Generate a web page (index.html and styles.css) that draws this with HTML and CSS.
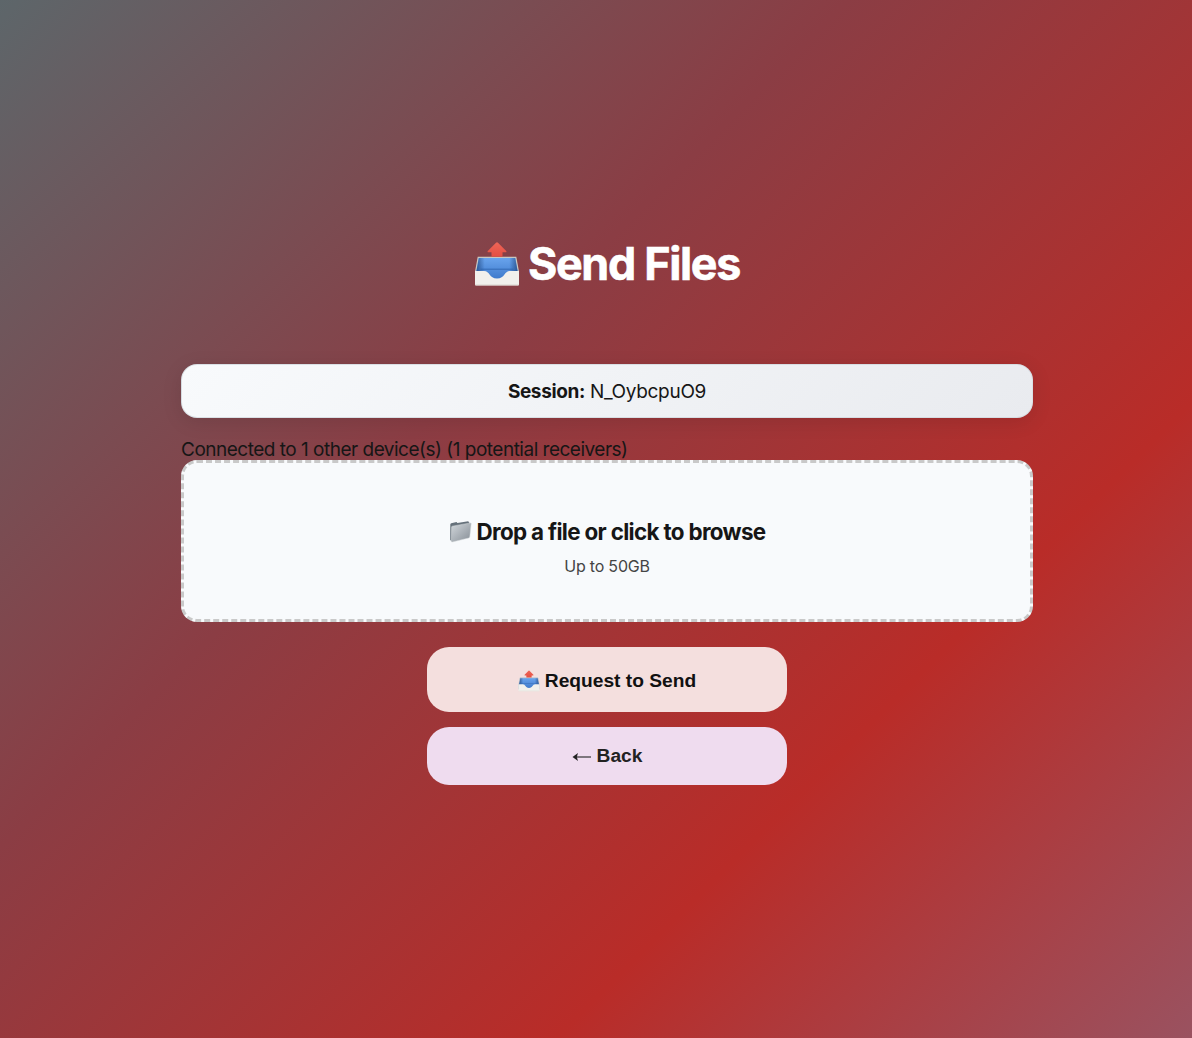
FILE: index.html
```html
<!DOCTYPE html>
<html lang="en">
<head>
<meta charset="utf-8">
<title>Send Files</title>
<link rel="stylesheet" href="styles.css">
</head>
<body>
<svg width="0" height="0" class="defs" aria-hidden="true">
  <defs>
    <linearGradient id="blue" x1="0" y1="0" x2="0" y2="1"><stop offset="0" stop-color="#6aa5ee"/><stop offset="1" stop-color="#3a76c8"/></linearGradient>
    <linearGradient id="side" x1="0" y1="0" x2="1" y2="0"><stop offset="0" stop-color="#173a70" stop-opacity=".65"/><stop offset=".2" stop-color="#173a70" stop-opacity="0"/><stop offset=".8" stop-color="#173a70" stop-opacity="0"/><stop offset="1" stop-color="#173a70" stop-opacity=".65"/></linearGradient>
    <linearGradient id="red" x1="0" y1="0" x2="0" y2="1"><stop offset="0" stop-color="#ee6557"/><stop offset="1" stop-color="#e44f43"/></linearGradient>
    <linearGradient id="metal" x1="0" y1="0" x2="1" y2="1"><stop offset="0" stop-color="#d2d7dc"/><stop offset="1" stop-color="#858d95"/></linearGradient>
    <symbol id="outbox" viewBox="0 0 46 46">
      <path d="M4.200 16.400H41.800L44.300 30V40H1.700V30Z" fill="url(#blue)" stroke="#c9c8c1" stroke-width="1.200"/>
      <path d="M4.800 17H41.200L43.500 30V38H2.500V30Z" fill="url(#side)"/>
      <path d="M6.500 28.200H39.500" stroke="#2c61a9" stroke-width=".8"/>
      <path d="M1 30H10C16 30 15 37.500 23 37.500S30 30 36 30H45V43.500Q45 44.400 44 44.400H2Q1 44.400 1 43.500Z" fill="#f1f0ec"/>
      <path d="M1.400 43.800H44.600" stroke="#dfddd7" stroke-width="1"/>
      <path d="M23 1.200Q23.500 1.200 24 1.700L32.200 9.900Q33 11.300 31.500 11.300H28.500V15.200Q28.500 15.800 27.800 15.800H18.200Q17.500 15.800 17.500 15.200V11.300H14.500Q13 11.300 13.800 9.900L22 1.700Q22.500 1.200 23 1.200Z" fill="url(#red)"/>
    </symbol>
    <symbol id="folder" viewBox="0 0 23 23">
      <path d="M1.300 4.400Q1.300 3.400 2.200 3.200L7.500 2L8.400 2.900L19.200 1.200L20.400 2.700L18 17L3.200 21.500L1.200 20Z" fill="#66717b"/>
      <path d="M3.300 6.200L21.500 2.900Q22.300 2.800 22.200 3.700L20.800 16.600Q20.600 17.700 19.700 18L3.200 22Q2.200 22.200 2.300 21.100L2.600 7.100Q2.600 6.400 3.300 6.200Z" fill="url(#metal)" stroke="#d6dadd" stroke-width=".5"/>
    </symbol>
  </defs>
</svg>
<main class="page">
  <h1 class="title"><svg class="title-icon" aria-hidden="true"><use href="#outbox"/></svg><span>Send Files</span></h1>
  <div class="session"><span><strong>Session:</strong> N_OybcpuO9</span></div>
  <p class="status">Connected to 1 other device(s) (1 potential receivers)</p>
  <div class="dropzone">
    <div class="drop-title"><svg class="folder-icon" aria-hidden="true"><use href="#folder"/></svg><span>Drop a file or click to browse</span></div>
    <div class="drop-hint">Up to 50GB</div>
  </div>
  <button class="btn send"><svg class="send-icon" aria-hidden="true"><use href="#outbox"/></svg><span>Request to Send</span></button>
  <button class="btn back"><svg class="arrow" viewBox="0 0 20 12" aria-hidden="true"><path d="M3 7H19" stroke="#333" stroke-width="1.200"/><path d="M.5 7L6 3L4.800 7L6 11Z" fill="#222"/></svg><span>Back</span></button>
</main>
</body>
</html>
```
FILE: styles.css
```css
* { box-sizing: border-box; }

body {
  margin: 0;
  height: 1038px;
  overflow: hidden;
  font-family: Inter, "Liberation Sans", sans-serif;
  color: #161616;
  background: linear-gradient(135deg, #5d666a 0%, #8b3d44 38%, #b92c28 71.5%, #9a5260 100%);
}

.defs { position: absolute; }

.page {
  display: flex;
  flex-direction: column;
  align-items: center;
  width: 852px;
  margin-left: 181px;
  padding-top: 236px;
}

.title {
  display: flex;
  align-items: center;
  gap: 8px;
  height: 56px;
  margin: 0 0 72px;
  font-size: 44.8px;
  font-weight: 700;
  letter-spacing: -1.3px;
  color: #fff;
  -webkit-text-stroke: 0.6px #fff;
}

.title-icon { width: 46px; height: 46px; margin-top: -1px; }
.title span { margin-top: -1px; }

.session {
  display: flex;
  align-items: center;
  justify-content: center;
  width: 100%;
  height: 54px;
  border: 1px solid rgba(205, 214, 220, 0.7);
  border-radius: 16px;
  background: linear-gradient(135deg, #f8fafc, #e9ebef);
  box-shadow: 0 4px 20px rgba(0, 0, 0, 0.1);
  font-size: 19px;
  letter-spacing: -0.3px;
}

.session strong { letter-spacing: -0.38px; }

.status {
  width: 100%;
  height: 22px;
  margin: 20px 0 0;
  padding-top: 1px;
  font-size: 19px;
  line-height: 22px;
  letter-spacing: -0.5px;
}

.dropzone {
  display: flex;
  flex-direction: column;
  align-items: center;
  width: 100%;
  height: 162px;
  padding-top: 53px;
  border: 3px dashed #c9c9c9;
  border-radius: 16px;
  background: #f8fafc;
}

.drop-title {
  display: flex;
  align-items: center;
  gap: 5px;
  height: 30px;
  font-size: 22.4px;
  font-weight: 700;
  letter-spacing: -0.67px;
}

.folder-icon { width: 23px; height: 23px; }

.drop-hint {
  margin-top: 9px;
  font-size: 16px;
  line-height: 22px;
  letter-spacing: -0.2px;
  color: #444;
}

.btn {
  display: flex;
  align-items: center;
  justify-content: center;
  width: 360px;
  padding: 0;
  border: 0;
  border-radius: 22px;
  font-family: "Liberation Sans", Arial, sans-serif;
  font-size: 19.2px;
  font-weight: 700;
}

.send {
  gap: 5px;
  height: 65px;
  margin-top: 25px;
  padding-top: 2px;
  background: #f4dfde;
  color: #111;
}

.send-icon { width: 22px; height: 22px; }

.back {
  gap: 5px;
  height: 58px;
  margin-top: 15px;
  background: #efdcef;
  color: #222;
}

.arrow { width: 20px; height: 12px; }
```
